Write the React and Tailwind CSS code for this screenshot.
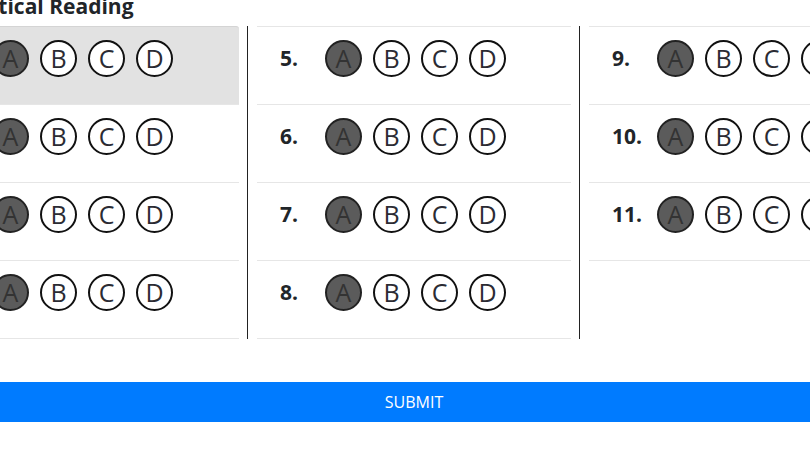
// App.jsx
import React from 'react';

const columns = [
    [1, 2, 3, 4],
    [5, 6, 7, 8],
    [9, 10, 11],
];

const Bubble = ({ letter, filled }) => (
    <div
        className={
            filled
                ? 'w-[37px] h-[37px] rounded-full border-2 border-[#222] bg-[#5b5b5b] flex items-center justify-center text-[25px] leading-none text-[#333]'
                : 'w-[37px] h-[37px] rounded-full border-2 border-[#111] bg-white flex items-center justify-center text-[25px] leading-none text-[#2b2b33]'
        }
    >
        {letter}
    </div>
);

const Row = ({ num, active, last }) => (
    <div
        className={
            'h-[78px] pt-[13px] pl-[23px] border-t ' +
            (active ? 'bg-[#e2e2e2] border-[#d4d4d4] rounded-tr-[3px] ' : 'border-[#e6e6e6] ') +
            (last ? 'border-b border-b-[#e6e6e6] h-[79px]' : '')
        }
    >
        <div className="flex items-center h-[37px]">
            <div className="w-[45px] text-[21px] font-bold text-[#212529]">{num}.</div>
            <div className="flex gap-[11px]">
                {['A', 'B', 'C', 'D'].map((l) => (
                    <Bubble key={l} letter={l} filled={l === 'A'} />
                ))}
            </div>
        </div>
    </div>
);

const App = () => {
    return (
        <div className="w-[810px] h-[460px] overflow-hidden bg-white font-['Open_Sans','Noto_Sans',sans-serif] text-[#212529]">
            <div className="w-[1000px] ml-[-86px]">
                <h2 className="ml-[55px] mt-[-8px] text-[21px] leading-7 font-bold">Critical Reading</h2>

                <div className="mt-[6px] flex">
                    {columns.map((col, ci) => (
                        <div
                            key={ci}
                            className={
                                ci === 0
                                    ? 'w-[333px] pl-[10px] pr-[8px]'
                                    : 'w-[332px] pl-[9px] pr-[8px] border-l border-[#222]'
                            }
                        >
                            {col.map((n, i) => (
                                <Row key={n} num={n} active={n === 1} last={i === col.length - 1} />
                            ))}
                        </div>
                    ))}
                </div>

                <button className="mt-[43px] w-full h-[40px] bg-[#007bff] text-white text-[16px] uppercase">
                    Submit
                </button>
            </div>
        </div>
    );
};

export default App;
